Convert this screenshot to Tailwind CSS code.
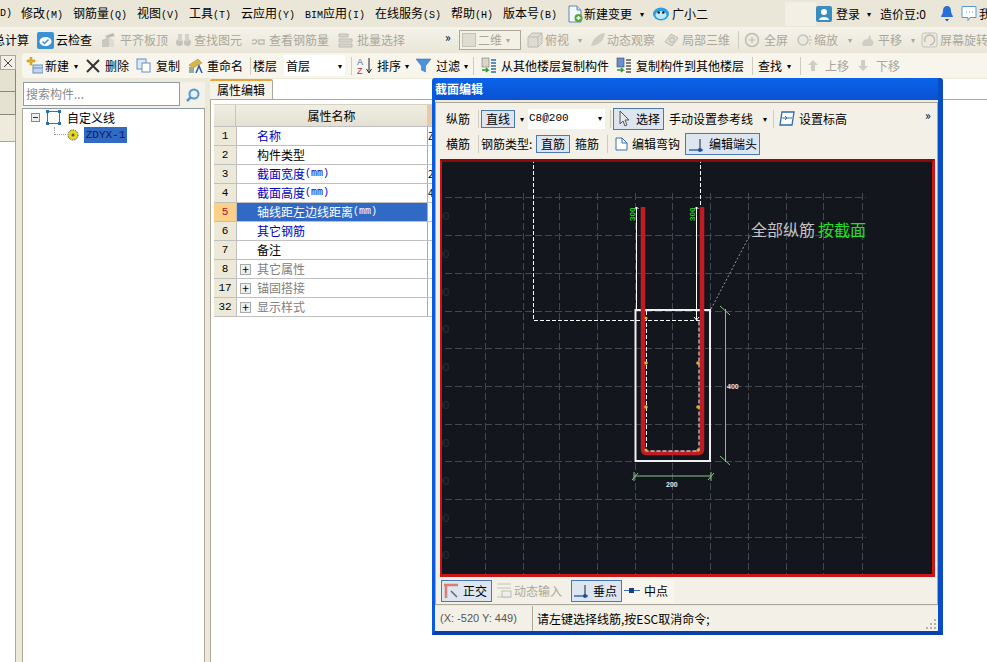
<!DOCTYPE html>
<html lang="zh">
<head>
<meta charset="UTF-8">
<title>截面编辑</title>
<script src="https://cdn.jsdelivr.net/npm/@tailwindcss/browser@4"></script>
</head>
<body class="w-[987px] h-[662px] overflow-hidden relative bg-[#ece9d8] text-[12px] leading-none text-black font-['Noto_Sans_CJK_SC',sans-serif]">

<!-- menu bar -->
<div class="h-[27px] flex items-center whitespace-nowrap overflow-hidden bg-[#ebe7d8] *:shrink-0">
  <span class="w-[21px] font-['Liberation_Mono'] text-[10px]">D)</span>
  <span class="w-[52px]">修改<span class="font-['Liberation_Mono'] text-[10px]">(M)</span></span>
  <span class="w-[64px]">钢筋量<span class="font-['Liberation_Mono'] text-[10px]">(Q)</span></span>
  <span class="w-[52px]">视图<span class="font-['Liberation_Mono'] text-[10px]">(V)</span></span>
  <span class="w-[52px]">工具<span class="font-['Liberation_Mono'] text-[10px]">(T)</span></span>
  <span class="w-[64px]">云应用<span class="font-['Liberation_Mono'] text-[10px]">(Y)</span></span>
  <span class="w-[70px]"><span class="font-['Liberation_Mono'] text-[10px]">BIM</span>应用<span class="font-['Liberation_Mono'] text-[10px]">(I)</span></span>
  <span class="w-[76px]">在线服务<span class="font-['Liberation_Mono'] text-[10px]">(S)</span></span>
  <span class="w-[52px]">帮助<span class="font-['Liberation_Mono'] text-[10px]">(H)</span></span>
  <span class="w-[63px]">版本号<span class="font-['Liberation_Mono'] text-[10px]">(B)</span></span>
  <svg class="w-[18px] h-[18px]" viewBox="0 0 18 18"><path d="M3 1h8l4 4v12H3z" fill="#f4f8fd" stroke="#5a87b8"/><path d="M11 1v4h4" fill="#cfe0f2" stroke="#5a87b8"/><circle cx="12.5" cy="13" r="4" fill="#4fa83a"/><path d="M10.5 13h4M12.5 11v4" stroke="#fff" stroke-width="1.4"/></svg>
  <span class="w-[56px]">新建变更</span>
  <span class="w-[12px] text-[8px]">▾</span>
  <svg class="w-[18px] h-[16px] mr-[2px]" viewBox="0 0 18 16"><ellipse cx="9" cy="8" rx="8" ry="6.5" fill="#2b9fe0"/><ellipse cx="9" cy="9" rx="5.5" ry="4" fill="#bfe8fb"/><circle cx="6.7" cy="6.5" r="1.3" fill="#123"/><circle cx="11.3" cy="6.5" r="1.3" fill="#123"/></svg>
  <span class="w-[113px]">广小二</span>
  <span class="w-[31px] h-[24px] bg-[#f2efe4]"></span>
  <svg class="w-[16px] h-[16px] mr-[4px]" viewBox="0 0 16 16"><rect width="16" height="16" rx="2" fill="#3b8cc0"/><circle cx="8" cy="6" r="3" fill="#fff"/><path d="M3 14c0-4 10-4 10 0z" fill="#fff"/></svg>
  <span class="w-[31px]">登录</span>
  <span class="w-[13px] text-[8px]">▾</span>
  <span class="w-[60px]">造价豆:0</span>
  <svg class="w-[14px] h-[17px] mr-[7px]" viewBox="0 0 14 17"><path d="M7 1c3 0 4 2.500 4 5 0 3 2 4 2 6H1c0-2 2-3 2-6 0-2.500 1-5 4-5z" fill="#2a6fd8"/><path d="M5 14h4l-2 2.500z" fill="#1d4f9e"/></svg>
  <svg class="w-[16px] h-[17px] mr-[2px]" viewBox="0 0 16 17"><path d="M1 1.500h14v11H9l-2 3v-3H1z" fill="#fff" stroke="#5a97d0"/><path d="M5 7h1M8 7h1M11 7h1" stroke="#5a97d0"/></svg>
  <span>我</span>
</div>

<!-- top toolbar, disabled items greyed -->
<div class="h-[26px] flex items-center whitespace-nowrap overflow-hidden bg-gradient-to-b from-[#f5f3ea] to-[#e9e6d8] *:shrink-0">
  <span class="w-[44px] ml-[-7px]">总计算</span>
  <svg class="w-[17px] h-[17px] mr-[2px]" viewBox="0 0 17 17"><rect width="17" height="17" rx="2" fill="#3a92d6"/><ellipse cx="8.500" cy="9.500" rx="6" ry="4.500" fill="#fff"/><path d="M5.500 9.500l2 2 4-4" stroke="#3a92d6" stroke-width="1.500" fill="none"/></svg>
  <span class="w-[45px]">云检查</span>
  <div class="contents text-[#a9a79b]">
    <svg class="w-[17px] h-[16px] mr-[2px] shrink-0" viewBox="0 0 17 16"><path d="M1 15V8l7-3v10z" fill="#c9c8bf"/><path d="M8 15V5l5 3v7z" fill="#dddcd3"/><path d="M4 4l8-3 2 3-8 2z" fill="#bdbcb2"/></svg>
    <span class="w-[55px] shrink-0">平齐板顶</span>
    <svg class="w-[17px] h-[16px] mr-[2px] shrink-0" viewBox="0 0 17 16"><circle cx="4.500" cy="10.500" r="3.500" fill="#c4c3ba"/><circle cx="12.500" cy="10.500" r="3.500" fill="#c4c3ba"/><rect x="3" y="2" width="4" height="7" fill="#d4d3ca"/><rect x="10" y="2" width="4" height="7" fill="#d4d3ca"/></svg>
    <span class="w-[56px] shrink-0">查找图元</span>
    <svg class="w-[17px] h-[16px] mr-[2px] shrink-0" viewBox="0 0 17 16"><path d="M2 9a3 3 0 0 1 5 0 3 3 0 0 1-5 2M9 8h5v4H9z" fill="none" stroke="#bdbcb2" stroke-width="1.500"/></svg>
    <span class="w-[69px] shrink-0">查看钢筋量</span>
    <svg class="w-[17px] h-[16px] mr-[2px] shrink-0" viewBox="0 0 17 16"><path d="M1 2h9v3H1zM1 7h13v3H1zM1 12h13v3H1z" fill="#d7d6cd" stroke="#bdbcb2"/></svg>
    <span class="w-[88px] shrink-0">批量选择</span>
  </div>
  <span class="w-[14px] text-[12px] text-black mt-[-7px]">»</span>
  <span class="w-[62px] h-[20px] flex items-center border border-[#aca899] bg-[#f3f1e6] text-[#a9a79b] px-[2px]"><span class="w-[14px] h-[14px] mr-[2px] bg-[#dfddd2] border border-[#c4c2b6]"></span><span class="w-[28px]">二维</span><span class="text-[8px]">▾</span></span>
  <div class="contents text-[#a9a79b]">
    <svg class="w-[16px] h-[16px] ml-[6px] mr-[2px] shrink-0" viewBox="0 0 16 16"><path d="M1 5l4-4h10v10l-4 4H1z" fill="#dedcd2" stroke="#bdbcb2"/><path d="M1 5h10v10M11 5l4-4" fill="none" stroke="#bdbcb2"/></svg>
    <span class="w-[33px] shrink-0">俯视</span>
    <span class="w-[12px] shrink-0 text-[8px]">▾</span>
    <svg class="w-[16px] h-[16px] mr-[1px] shrink-0" viewBox="0 0 16 16"><path d="M1 14C3 6 8 2 15 1c-1 7-5 12-14 13z" fill="#cfcec4"/></svg>
    <span class="w-[56px] shrink-0">动态观察</span>
    <svg class="w-[17px] h-[16px] mr-[2px] shrink-0" viewBox="0 0 17 16"><path d="M2 10l6-8 7 4-6 8z" fill="#dddcd3" stroke="#bdbcb2"/><circle cx="9" cy="8" r="2.500" fill="none" stroke="#bdbcb2"/></svg>
    <span class="w-[56px] shrink-0">局部三维</span>
    <span class="w-[1px] h-[18px] shrink-0 bg-[#cfccbd] mr-[5px]"></span>
    <svg class="w-[17px] h-[16px] mr-[3px] shrink-0" viewBox="0 0 17 16"><circle cx="8" cy="8" r="6.500" fill="#eceadf" stroke="#bdbcb2" stroke-width="1.500"/><path d="M8 5v6M5 8h6" stroke="#bdbcb2"/></svg>
    <span class="w-[33px] shrink-0">全屏</span>
    <svg class="w-[15px] h-[16px] mr-[2px] shrink-0" viewBox="0 0 15 16"><circle cx="6" cy="8" r="5" fill="#eceadf" stroke="#c4c3ba" stroke-width="1.500"/><path d="M12 4l2 1M12 8h3M12 12l2-1" stroke="#bdbcb2"/></svg>
    <span class="w-[34px] shrink-0">缩放</span>
    <span class="w-[12px] shrink-0 text-[8px]">▾</span>
    <svg class="w-[16px] h-[16px] mr-[2px] shrink-0" viewBox="0 0 16 16"><path d="M3 14c-2-5 2-7 5-7l2-5 1 5c3 2 3 5 1 7z" fill="#cfcec4"/></svg>
    <span class="w-[33px] shrink-0">平移</span>
    <span class="w-[10px] shrink-0 text-[8px]">▾</span>
    <svg class="w-[17px] h-[16px] mr-[2px] shrink-0" viewBox="0 0 17 16"><rect x="1" y="1" width="15" height="14" rx="2" fill="#eceadf" stroke="#c4c3ba"/><path d="M4 10a5 5 0 1 1 5 3" fill="none" stroke="#bdbcb2" stroke-width="1.500"/></svg>
    <span class="shrink-0">屏幕旋转</span>
  </div>
</div>

<div class="flex h-[609px]">
  <!-- collapsed side strip -->
  <div class="w-[16px] shrink-0 flex flex-col">
    <div class="h-[17px] pt-[2px]"><div class="h-[15px] border border-[#aca899] bg-[#f2f0e6] flex items-center justify-center text-[#444]">
      <svg class="w-[8px] h-[8px]" viewBox="0 0 8 8"><path d="M0 0l8 8M8 0L0 8" stroke="#444"/></svg></div></div>
    <div class="h-[22px] bg-[#e6e2d1] border-b border-r border-[#8a8779]"></div>
    <div class="h-[23px] bg-[#e6e2d1] border-b border-r border-[#8a8779]"></div>
    <div class="h-[27px] bg-[#eeebdd] border-b border-r border-[#aca899]"></div>
    <div class="flex-1 bg-white border-r border-[#aca899]"></div>
  </div>

  <div class="flex-1 flex flex-col pl-[6px] min-w-0">
    <!-- component toolbar -->
    <div class="h-[25px] shrink-0 flex items-center whitespace-nowrap overflow-hidden bg-[#f7f5ec] rounded-l-[4px] pl-[4px] *:shrink-0">
      <svg class="w-[17px] h-[17px] mr-[2px]" viewBox="0 0 17 17"><path d="M4 0h2v3h3v2H6v3H4V5H1V3h3z" fill="#e6b422" stroke="#b08a10" stroke-width=".5"/><rect x="7" y="8" width="10" height="8" fill="#c5d6ec" stroke="#6a8fbd"/><path d="M7 11h10" stroke="#6a8fbd"/></svg>
      <span class="w-[29px]">新建</span>
      <span class="w-[12px] text-[8px]">▾</span>
      <svg class="w-[14px] h-[14px] mr-[5px]" viewBox="0 0 14 14"><path d="M1 1l12 12M13 1L1 13" stroke="#333" stroke-width="2"/></svg>
      <span class="w-[31px]">删除</span>
      <svg class="w-[15px] h-[15px] mr-[5px]" viewBox="0 0 15 15"><rect x="1" y="1" width="9" height="10" fill="#dfe9f6" stroke="#6a8fbd"/><rect x="6" y="5" width="8" height="9" fill="#fff" stroke="#6a8fbd"/></svg>
      <span class="w-[31px]">复制</span>
      <svg class="w-[17px] h-[17px] mr-[3px]" viewBox="0 0 17 17"><path d="M2 8l9-6 4 4-9 5z" fill="#d9b64a" stroke="#97802f" stroke-width=".5"/><path d="M2 10h5v6H2z" fill="#8fb09a"/><path d="M9 16l3-7 3 7" fill="none" stroke="#2a5a9e" stroke-width="1.500"/></svg>
      <span class="w-[43px]">重命名</span>
      <span class="w-[1px] h-[18px] bg-[#cfccbd] mr-[2px]"></span>
      <span class="w-[31px]">楼层</span>
      <span class="w-[61px] h-[21px] bg-white flex items-center justify-between pl-[2px] pr-[3px]">首层<span class="text-[8px]">▾</span></span>
      <span class="w-[1px] h-[18px] bg-[#cfccbd] ml-[6px] mr-[5px]"></span>
      <svg class="w-[17px] h-[18px] mr-[3px]" viewBox="0 0 17 18"><text x="0" y="8" font-size="9" fill="#3a6fb0" font-family="Liberation Sans">A</text><text x="0" y="17" font-size="9" fill="#c03030" font-family="Liberation Sans">Z</text><path d="M12 1v14M9.500 12l2.500 4 2.500-4" stroke="#222" fill="none"/></svg>
      <span class="w-[28px]">排序</span>
      <span class="w-[11px] text-[8px]">▾</span>
      <svg class="w-[15px] h-[15px] mr-[5px]" viewBox="0 0 15 15"><path d="M0 1h15L9.500 8v6l-4-2V8z" fill="#4a92dc" stroke="#2d6bb0" stroke-width=".5"/></svg>
      <span class="w-[28px]">过滤</span>
      <span class="w-[9px] text-[8px]">▾</span>
      <span class="w-[1px] h-[18px] bg-[#cfccbd] mr-[7px]"></span>
      <svg class="w-[16px] h-[18px] mr-[4px]" viewBox="0 0 16 18"><rect x="1" y="1" width="7" height="9" fill="#d8d6c8" stroke="#777" stroke-width=".6"/><path d="M1 13h6l-2-2M7 13l-2 2" stroke="#2c9a35" stroke-width="1.500" fill="none"/><path d="M10 3h5M10 6h5M10 9h5M10 12h5M10 15h5" stroke="#2d6bb0" stroke-width="1.500"/></svg>
      <span class="w-[115px]">从其他楼层复制构件</span>
      <svg class="w-[16px] h-[18px] mr-[4px]" viewBox="0 0 16 18"><rect x="1" y="1" width="7" height="9" fill="#6a8fd0" stroke="#345" stroke-width=".6"/><path d="M1 13h6l-2-2M7 13l-2 2" stroke="#2c9a35" stroke-width="1.500" fill="none"/><path d="M10 3h5M10 6h5M10 9h5M10 12h5M10 15h5" stroke="#555" stroke-width="1.500"/></svg>
      <span class="w-[116px]">复制构件到其他楼层</span>
      <span class="w-[1px] h-[18px] bg-[#cfccbd] mr-[5px]"></span>
      <span class="w-[29px]">查找</span>
      <span class="w-[13px] text-[8px]">▾</span>
      <span class="w-[1px] h-[18px] bg-[#cfccbd] mr-[7px]"></span>
      <svg class="w-[10px] h-[11px] mr-[7px]" viewBox="0 0 10 11"><path d="M5 0l5 5H7v6H3V5H0z" fill="#cfcec4"/></svg>
      <span class="w-[33px] text-[#a9a79b]">上移</span>
      <svg class="w-[10px] h-[11px] mr-[8px]" viewBox="0 0 10 11"><path d="M5 11l5-5H7V0H3v6H0z" fill="#cfcec4"/></svg>
      <span class="text-[#a9a79b]">下移</span>
    </div>

    <div class="flex-1 flex min-h-0">
      <!-- component tree -->
      <div class="w-[183px] shrink-0 flex flex-col">
        <div class="h-[4px]"></div>
        <div class="h-[26px] flex bg-[#f3f1e8]">
          <div class="w-[157px] h-[24px] ml-[1px] border border-[#8a9aa8] bg-white flex items-center pl-[2px] text-[#8a8a8a]">搜索构件...</div>
          <div class="flex-1 flex items-center justify-center">
            <svg class="w-[15px] h-[15px]" viewBox="0 0 15 15"><circle cx="9" cy="6" r="4.500" fill="#e4f0fa" stroke="#5a97c8" stroke-width="2"/><path d="M6 9l-4 4" stroke="#5a97c8" stroke-width="2.500"/></svg>
          </div>
        </div>
        <div class="flex-1 bg-white border-l border-r border-[#aca899] border-t-[#8a9aa8] border-t">
          <div class="flex items-center h-[17px]">
            <span class="ml-[8px] w-[9px] h-[9px] border border-[#8a8a8a] bg-[#eeeeee] flex items-center justify-center"><span class="w-[5px] h-[1px] bg-[#333]"></span></span>
            <svg class="w-[15px] h-[15px] ml-[6px]" viewBox="0 0 15 15"><rect x="1.500" y="1.500" width="12" height="12" fill="none" stroke="#3a6fb0"/><path d="M0 0h3v3H0zM12 0h3v3h-3zM0 12h3v3H0zM12 12h3v3h-3z" fill="#2d6bb0"/></svg>
            <span class="ml-[6px]">自定义线</span>
          </div>
          <div class="flex items-center h-[16px] ml-[31px] mt-[1px]">
            <span class="w-[12px] h-[8px] border-l border-b border-dotted border-[#999] mt-[-8px]"></span>
            <svg class="w-[12px] h-[12px] ml-[1px]" viewBox="0 0 12 12"><circle cx="6" cy="6" r="5" fill="#e8d820" stroke="#555" stroke-dasharray="1.500 1"/><circle cx="6" cy="6" r="1.500" fill="#555"/></svg>
            <span class="ml-[5px] h-[16px] w-[43px] bg-[#316ac5] text-[#0b1c55] font-['Liberation_Mono'] text-[11px] flex items-center justify-center">ZDYX-1</span>
          </div>
        </div>
      </div>

      <!-- property editor -->
      <div class="flex-1 flex flex-col pl-[5px] min-w-0">
        <div class="h-[1px]"></div>
        <div class="h-[20px] flex shrink-0 bg-white">
          <div class="w-[63px] h-[20px] bg-[#f6f4ea] border-t-2 border-[#e8a33a] border-r border-r-[#aca899] rounded-t-[2px] flex items-center justify-center">属性编辑</div>
        </div>
        <div class="flex-1 bg-white border-t border-l border-[#aca899] pt-[4px] pl-[3px]">
          <div class="w-[218px] flex h-[22px] bg-gradient-to-b from-[#f0eee4] to-[#e4e1d3] border-t border-[#d5d2c4] *:shrink-0">
            <span class="w-[22px] border-r border-[#c8c5b6]"></span>
            <span class="w-[191px] flex items-center justify-center">属性名称</span>
            <span class="flex-1 bg-[#e9c9a0]"></span>
          </div>
          <div class="w-[218px] overflow-hidden">
            <div class="flex h-[19px] border-t border-[#c0c0c0] *:shrink-0"><span class="w-[22px] bg-[#ece9d8] flex items-center justify-center font-['Liberation_Mono'] text-[11px]">1</span><span class="w-[191px] pl-[20px] flex items-center text-[#0000c0] border-l border-[#c0c0c0]">名称</span><span class="border-l border-[#aaa] text-[10px] flex items-center">Z</span></div>
            <div class="flex h-[19px] border-t border-[#c0c0c0] *:shrink-0"><span class="w-[22px] bg-[#ece9d8] flex items-center justify-center font-['Liberation_Mono'] text-[11px]">2</span><span class="w-[191px] pl-[20px] flex items-center border-l border-[#c0c0c0]">构件类型</span><span class="border-l border-[#aaa]"></span></div>
            <div class="flex h-[19px] border-t border-[#c0c0c0] *:shrink-0"><span class="w-[22px] bg-[#ece9d8] flex items-center justify-center font-['Liberation_Mono'] text-[11px]">3</span><span class="w-[191px] pl-[20px] flex items-center text-[#0000c0] border-l border-[#c0c0c0]">截面宽度<span class="font-['Liberation_Mono'] text-[10px]">(mm)</span></span><span class="border-l border-[#aaa] text-[10px] flex items-center">2</span></div>
            <div class="flex h-[19px] border-t border-[#c0c0c0] *:shrink-0"><span class="w-[22px] bg-[#ece9d8] flex items-center justify-center font-['Liberation_Mono'] text-[11px]">4</span><span class="w-[191px] pl-[20px] flex items-center text-[#0000c0] border-l border-[#c0c0c0]">截面高度<span class="font-['Liberation_Mono'] text-[10px]">(mm)</span></span><span class="border-l border-[#aaa] text-[10px] flex items-center">4</span></div>
            <div class="flex h-[19px] border-t border-[#c0c0c0] *:shrink-0"><span class="w-[22px] bg-[#fcd088] text-[#a02020] flex items-center justify-center font-['Liberation_Mono'] text-[11px]">5</span><span class="w-[191px] pl-[20px] flex items-center text-white bg-[#316ac5] border-l border-[#c0c0c0]">轴线距左边线距离<span class="font-['Liberation_Mono'] text-[10px]">(mm)</span></span><span class="border-l border-[#aaa]"></span></div>
            <div class="flex h-[19px] border-t border-[#c0c0c0] *:shrink-0"><span class="w-[22px] bg-[#ece9d8] flex items-center justify-center font-['Liberation_Mono'] text-[11px]">6</span><span class="w-[191px] pl-[20px] flex items-center text-[#0000c0] border-l border-[#c0c0c0]">其它钢筋</span><span class="border-l border-[#aaa]"></span></div>
            <div class="flex h-[19px] border-t border-[#c0c0c0] *:shrink-0"><span class="w-[22px] bg-[#ece9d8] flex items-center justify-center font-['Liberation_Mono'] text-[11px]">7</span><span class="w-[191px] pl-[20px] flex items-center border-l border-[#c0c0c0]">备注</span><span class="border-l border-[#aaa]"></span></div>
            <div class="flex h-[19px] border-t border-[#c0c0c0] *:shrink-0"><span class="w-[22px] bg-[#ece9d8] flex items-center justify-center font-['Liberation_Mono'] text-[11px]">8</span><span class="w-[191px] pl-[3px] flex items-center text-[#808080] border-l border-[#c0c0c0]"><span class="w-[11px] h-[11px] border border-[#aaa] bg-[#efefef] text-black flex items-center justify-center mr-[6px]">+</span>其它属性</span><span class="border-l border-[#aaa]"></span></div>
            <div class="flex h-[19px] border-t border-[#c0c0c0] *:shrink-0"><span class="w-[22px] bg-[#ece9d8] flex items-center justify-center font-['Liberation_Mono'] text-[11px]">17</span><span class="w-[191px] pl-[3px] flex items-center text-[#808080] border-l border-[#c0c0c0]"><span class="w-[11px] h-[11px] border border-[#aaa] bg-[#efefef] text-black flex items-center justify-center mr-[6px]">+</span>锚固搭接</span><span class="border-l border-[#aaa]"></span></div>
            <div class="flex h-[20px] border-y border-[#c0c0c0] *:shrink-0"><span class="w-[22px] bg-[#ece9d8] flex items-center justify-center font-['Liberation_Mono'] text-[11px]">32</span><span class="w-[191px] pl-[3px] flex items-center text-[#808080] border-l border-[#c0c0c0]"><span class="w-[11px] h-[11px] border border-[#aaa] bg-[#efefef] text-black flex items-center justify-center mr-[6px]">+</span>显示样式</span><span class="border-l border-[#aaa]"></span></div>
          </div>
        </div>
      </div>
    </div>
  </div>
</div>

<!-- section editor dialog -->
<div class="absolute left-[432px] top-[78px] w-[511px] h-[557px] flex flex-col bg-[#0a54d6] border-l-[3px] border-r-[5px] border-b-[4px] border-l-[#0a5ae0] border-r-[#0a4cc4] border-b-[#0a3fb0] rounded-t-[3px] whitespace-nowrap">
  <div class="h-[22px] shrink-0 flex items-center text-white font-bold text-[12px] bg-gradient-to-b from-[#0a64e8] to-[#0a50d2]">截面编辑</div>
  <div class="flex-1 bg-[#ece9d8] flex flex-col min-h-0">
    <div class="h-[503px] mt-[2px] border border-[#aca899] bg-[#f3f1e7] flex flex-col pl-[4px] pr-[2px]">
      <div class="h-[27px] flex items-center mt-[2px] *:shrink-0">
        <span class="w-[38px] pl-[6px]">纵筋</span>
        <span class="w-[1px] h-[18px] bg-[#cfccbd] mr-[2px]"></span>
        <span class="w-[34px] h-[18px] border border-[#4a78b0] bg-[#dde5f0] flex items-center justify-center">直线</span>
        <span class="w-[13px] text-center text-[8px]">▾</span>
        <span class="w-[77px] h-[20px] bg-white flex items-center justify-between pl-[1px] pr-[3px] font-['Liberation_Mono'] text-[11px]">C8@200<span class="text-[8px]">▾</span></span>
        <span class="w-[1px] h-[18px] bg-[#cfccbd] ml-[5px] mr-[2px]"></span>
        <span class="w-[51px] h-[22px] border border-[#4a78b0] bg-[#dde5f0] flex items-center pl-[5px]"><svg class="w-[12px] h-[17px] mr-[5px]" viewBox="0 0 12 17"><path d="M1 1v13l3-3 2 5 2-1-2-5h4z" fill="#e8e8e8" stroke="#555"/></svg>选择</span>
        <span class="w-[94px] ml-[5px]">手动设置参考线</span>
        <span class="w-[10px] text-[8px]">▾</span>
        <span class="w-[1px] h-[18px] bg-[#cfccbd] mr-[5px]"></span>
        <svg class="w-[16px] h-[15px] mr-[4px]" viewBox="0 0 16 15"><path d="M3 1h12l-2 13H1z" fill="#fff" stroke="#2d6bb0" stroke-width="1.300"/><path d="M3 7h10M6 5l2 2-2 2" stroke="#2d6bb0" fill="none"/></svg>
        <span class="w-[126px]">设置标高</span>
        <span class="text-[12px] mt-[-7px]">»</span>
      </div>
      <div class="h-[24px] flex items-center *:shrink-0">
        <span class="w-[38px] pl-[6px]">横筋</span>
        <span class="w-[1px] h-[18px] bg-[#cfccbd] mr-[2px]"></span>
        <span class="w-[55px]">钢筋类型:</span>
        <span class="w-[34px] h-[18px] border border-[#4a78b0] bg-[#dde5f0] flex items-center justify-center">直筋</span>
        <span class="w-[32px] ml-[5px]">箍筋</span>
        <span class="w-[1px] h-[18px] bg-[#cfccbd] mr-[6px]"></span>
        <svg class="w-[15px] h-[15px] mr-[3px]" viewBox="0 0 15 15"><path d="M2 1h6l5 5v7H2z" fill="#fff" stroke="#3a6fb0"/><path d="M8 1v5h5" fill="none" stroke="#3a6fb0"/></svg>
        <span class="w-[53px]">编辑弯钩</span>
        <span class="w-[75px] h-[22px] border border-[#4a78b0] bg-[#dde5f0] flex items-center pl-[2px]"><svg class="w-[16px] h-[15px] mr-[5px]" viewBox="0 0 16 15"><path d="M1 13h14" stroke="#2d6bb0" stroke-width="1.500"/><path d="M12 2v11" stroke="#222"/><circle cx="12" cy="13" r="2" fill="#1b4f9e"/></svg>编辑端头</span>
      </div>
      <!-- drawing canvas -->
      <div class="w-[495px] h-[418px] mt-[3px] shrink-0 border-l-[2px] border-r-[3px] border-t-[3px] border-b-[3px] border-l-[#d01010] border-r-[#c81818] border-t-[#8c0a0a] border-b-[#c81818] bg-[#14161e]">
        <svg class="block w-[490px] h-[412px]" viewBox="442 162 490 412" font-family="Liberation Sans">
          <g stroke="#44474d" stroke-width="1" stroke-dasharray="7 3" fill="none">
            <path d="M445 197.500H866M445 235.500H866M445 273.500H866M445 311.500H866M445 348.500H866M445 386.500H866M445 424.500H866M445 461.500H866M445 499.500H866M445 537.500H866"/>
            <path d="M485.500 193V577M523.500 193V577M559.500 193V577M597.500 193V577M635.500 193V577M672.500 193V577M710.500 193V577M748.500 193V577M786.500 193V577M823.500 193V577M862.500 193V577"/>
          </g>
          <g fill="#2e3037" font-size="11">
            <text x="437" y="220">00</text><text x="437" y="258">00</text><text x="437" y="296">00</text><text x="437" y="333">00</text><text x="437" y="371">00</text><text x="437" y="409">00</text><text x="437" y="447">00</text><text x="437" y="485">00</text><text x="437" y="522">00</text><text x="437" y="559">00</text>
          </g>
          <!-- projected outline -->
          <path d="M533.500 159V320.500H700.500V159" fill="none" stroke="#fff" stroke-dasharray="4 2"/>
          <!-- column outline -->
          <rect x="635.500" y="310" width="74.500" height="151" fill="none" stroke="#f0f0f0" stroke-width="2"/>
          <!-- hook lines -->
          <path d="M636.500 207V310M696.500 207V320" stroke="#fff" fill="none"/>
          <path d="M634.500 209l2-2 2 2M694.500 209l2-2 2 2M694 317l2.500 3 2.500-3" stroke="#fff" fill="none"/>
          <!-- rebar -->
          <path d="M643 207V449q0 4 4 4H698q4 0 4-4V207" fill="none" stroke="#c01c22" stroke-width="4.500"/>
          <path d="M646.500 311V451H699V320" fill="none" stroke="#fff" stroke-dasharray="4 2"/>
          <g fill="#e0b030">
            <circle cx="646" cy="318" r="1.500"/><circle cx="646" cy="363" r="1.800"/><circle cx="698" cy="363" r="1.800"/><circle cx="646" cy="407" r="1.800"/><circle cx="698" cy="407" r="1.800"/><circle cx="646" cy="450" r="1.500"/><circle cx="698" cy="450" r="1.500"/>
          </g>
          <!-- dimensions -->
          <g stroke="#86c486" fill="none">
            <path d="M725.500 309V462M720 306l10 9M720 456l10 9"/>
            <path d="M634.500 476H711M634 472v9M711 472v9M632 480l6-7M708 480l6-7"/>
          </g>
          <text x="727" y="389" font-size="7" font-weight="bold" fill="#e8e8e8">400</text>
          <text x="666" y="487" font-size="7" font-weight="bold" fill="#e8e8e8">200</text>
          <text transform="translate(635 221) rotate(-90)" font-size="8" font-weight="bold" fill="#22d020">300</text>
          <text transform="translate(695 221) rotate(-90)" font-size="8" font-weight="bold" fill="#22d020">300</text>
          <path d="M711 309L750 235" stroke="#9a9a9a" stroke-dasharray="2 2" fill="none"/>
          <text x="751" y="236" font-size="16" fill="#c4c4c4" font-family="Noto Sans CJK SC">全部纵筋</text>
          <text x="818" y="236" font-size="16" fill="#22e022" font-family="Noto Sans CJK SC">按截面</text>
        </svg>
      </div>
      <div class="h-[27px] flex items-center *:shrink-0">
        <span class="w-[51px] h-[22px] ml-[1px] border border-[#4a78b0] bg-[#dde5f0] flex items-center pl-[1px]"><svg class="w-[17px] h-[16px] mr-[3px]" viewBox="0 0 17 16"><path d="M1 2h14M3 2v13" stroke="#d88070" stroke-width="2.500"/><path d="M8 8l6 6" stroke="#667" stroke-width="1.500"/></svg>正交</span>
        <svg class="w-[16px] h-[15px] ml-[4px] mr-[2px]" viewBox="0 0 16 15"><path d="M1 1h14M1 5h14M1 14h14" stroke="#c4c3ba"/><rect x="6" y="8" width="9" height="6" fill="#eee" stroke="#bdbcb2"/></svg>
        <span class="w-[57px] text-[#a9a79b]">动态输入</span>
        <span class="w-[51px] h-[22px] border border-[#4a78b0] bg-[#dde5f0] flex items-center pl-[1px]"><svg class="w-[16px] h-[15px] mr-[4px]" viewBox="0 0 16 15"><path d="M1 13h14" stroke="#2d6bb0" stroke-width="1.500"/><path d="M12 2v11" stroke="#222"/><circle cx="12" cy="13" r="2" fill="#1b4f9e"/></svg>垂点</span>
        <span class="w-[52px] h-[24px] bg-[#f7f5ec] flex items-center pl-[2px]"><svg class="w-[16px] h-[7px] mr-[4px]" viewBox="0 0 16 7"><path d="M0 3.500h16" stroke="#3a6fb0"/><rect x="5" y="1" width="5" height="5" fill="#1b3f8e"/></svg>中点</span>
      </div>
    </div>
    <div class="flex-1 flex items-center bg-[#f3f1e7] mt-[1px]">
      <span class="w-[98px] pl-[5px] text-[#555] font-['Liberation_Sans'] text-[11px] h-full flex items-center border-r border-[#aca899]">(X: -520 Y: 449)</span>
      <span class="pl-[4px] h-full flex-1 flex items-center">请左键选择线筋,按ESC取消命令;</span>
      <svg class="w-[12px] h-[12px] self-end mr-[1px] mb-[1px]" viewBox="0 0 12 12" fill="#b5b2a2"><path d="M9 1h2v2H9zM5 5h2v2H5zM9 5h2v2H9zM1 9h2v2H1zM5 9h2v2H5zM9 9h2v2H9z"/></svg>
    </div>
  </div>
</div>

</body>
</html>
